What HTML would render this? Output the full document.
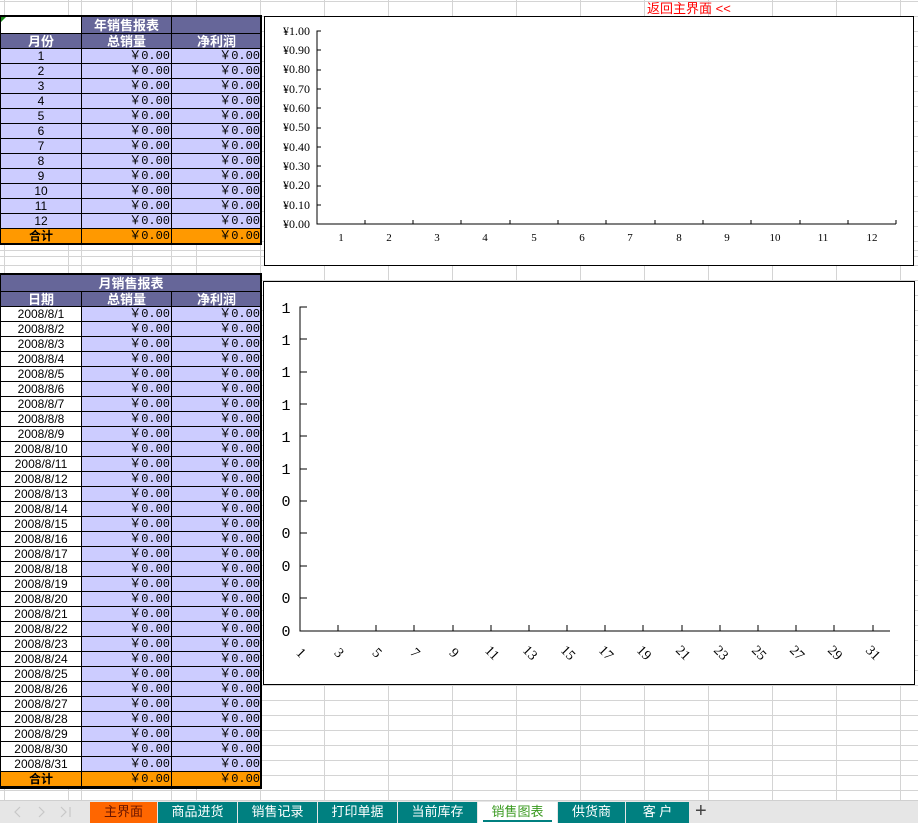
<!DOCTYPE html>
<html><head><meta charset="utf-8"><style>
*{margin:0;padding:0;box-sizing:border-box}
body{width:918px;height:823px;overflow:hidden;background:#fff;position:relative;font-family:"Liberation Sans","Noto Sans CJK SC",sans-serif}
.grid{position:absolute;left:0;width:918px;
background-image:linear-gradient(to right,#d4d4d4 1px,transparent 1px),linear-gradient(to bottom,#d4d4d4 1px,transparent 1px);}
.g1{top:0;height:260px;background-size:64px 15px;background-position:260px 1px}
.g2{top:243px;height:557px;background-size:64px 15px;background-position:260px 7px}
.gl{position:absolute;top:0;width:1px;height:800px;background:#d4d4d4}
table{position:absolute;left:0;border-collapse:collapse;width:261px;table-layout:fixed}
td{height:15px;font-size:12px;line-height:13px;border:1px solid #000;padding:0 1px;white-space:nowrap;overflow:hidden}
td.n{text-align:right;font-family:"Liberation Mono","Noto Sans CJK SC",monospace;background:#ccccff}
td.c{text-align:center;background:#ccccff}
td.w{text-align:center;background:#fff}
tr.h td{background:#666699;color:#fff;font-weight:bold;text-align:center;font-size:13px}
tr.t td{background:#ff9900;font-weight:bold}
tr.t td.n{background:#ff9900;font-weight:normal}
.box{position:absolute;border:2px solid #000;pointer-events:none}
.chart{position:absolute;background:#fff;border:1px solid #000}
.tabs{position:absolute;left:0;top:800px;width:918px;height:23px;background:#e6e6e6;border-top:1px solid #d0d0d0}
.tab{position:absolute;top:1px;height:21px;background:#008080;color:#fff;font-size:13px;text-align:center;line-height:20px}
</style></head><body>
<div class="grid g1"></div>
<div class="grid g2"></div>
<div class="gl" style="left:81px"></div><div class="gl" style="left:171px"></div>

<div style="position:absolute;left:647px;top:2px;color:#f00;font-size:13px;line-height:14px">返回主界面 &lt;&lt;</div>

<table style="top:16px">
<colgroup><col style="width:81px"><col style="width:90px"><col style="width:90px"></colgroup>
<tr class="h"><td style="background:#fff;height:17px;position:relative"><span style="position:absolute;left:0;top:0;border-top:5px solid #1a8a1a;border-right:5px solid transparent"></span></td><td>年销售报表</td><td></td></tr>
<tr class="h"><td>月份</td><td>总销量</td><td>净利润</td></tr>
<tr><td class="c">1</td><td class="n">￥0.00</td><td class="n">￥0.00</td></tr>
<tr><td class="c">2</td><td class="n">￥0.00</td><td class="n">￥0.00</td></tr>
<tr><td class="c">3</td><td class="n">￥0.00</td><td class="n">￥0.00</td></tr>
<tr><td class="c">4</td><td class="n">￥0.00</td><td class="n">￥0.00</td></tr>
<tr><td class="c">5</td><td class="n">￥0.00</td><td class="n">￥0.00</td></tr>
<tr><td class="c">6</td><td class="n">￥0.00</td><td class="n">￥0.00</td></tr>
<tr><td class="c">7</td><td class="n">￥0.00</td><td class="n">￥0.00</td></tr>
<tr><td class="c">8</td><td class="n">￥0.00</td><td class="n">￥0.00</td></tr>
<tr><td class="c">9</td><td class="n">￥0.00</td><td class="n">￥0.00</td></tr>
<tr><td class="c">10</td><td class="n">￥0.00</td><td class="n">￥0.00</td></tr>
<tr><td class="c">11</td><td class="n">￥0.00</td><td class="n">￥0.00</td></tr>
<tr><td class="c">12</td><td class="n">￥0.00</td><td class="n">￥0.00</td></tr>
<tr class="t"><td style="text-align:center">合计</td><td class="n">￥0.00</td><td class="n">￥0.00</td></tr>
</table>
<div class="box" style="left:-2px;top:15px;width:264px;height:230px"></div>

<table style="top:274px">
<colgroup><col style="width:81px"><col style="width:90px"><col style="width:90px"></colgroup>
<tr class="h"><td colspan="3" style="height:17px">月销售报表</td></tr>
<tr class="h"><td>日期</td><td>总销量</td><td>净利润</td></tr>
<tr><td class="w">2008/8/1</td><td class="n">￥0.00</td><td class="n">￥0.00</td></tr>
<tr><td class="w">2008/8/2</td><td class="n">￥0.00</td><td class="n">￥0.00</td></tr>
<tr><td class="w">2008/8/3</td><td class="n">￥0.00</td><td class="n">￥0.00</td></tr>
<tr><td class="w">2008/8/4</td><td class="n">￥0.00</td><td class="n">￥0.00</td></tr>
<tr><td class="w">2008/8/5</td><td class="n">￥0.00</td><td class="n">￥0.00</td></tr>
<tr><td class="w">2008/8/6</td><td class="n">￥0.00</td><td class="n">￥0.00</td></tr>
<tr><td class="w">2008/8/7</td><td class="n">￥0.00</td><td class="n">￥0.00</td></tr>
<tr><td class="w">2008/8/8</td><td class="n">￥0.00</td><td class="n">￥0.00</td></tr>
<tr><td class="w">2008/8/9</td><td class="n">￥0.00</td><td class="n">￥0.00</td></tr>
<tr><td class="w">2008/8/10</td><td class="n">￥0.00</td><td class="n">￥0.00</td></tr>
<tr><td class="w">2008/8/11</td><td class="n">￥0.00</td><td class="n">￥0.00</td></tr>
<tr><td class="w">2008/8/12</td><td class="n">￥0.00</td><td class="n">￥0.00</td></tr>
<tr><td class="w">2008/8/13</td><td class="n">￥0.00</td><td class="n">￥0.00</td></tr>
<tr><td class="w">2008/8/14</td><td class="n">￥0.00</td><td class="n">￥0.00</td></tr>
<tr><td class="w">2008/8/15</td><td class="n">￥0.00</td><td class="n">￥0.00</td></tr>
<tr><td class="w">2008/8/16</td><td class="n">￥0.00</td><td class="n">￥0.00</td></tr>
<tr><td class="w">2008/8/17</td><td class="n">￥0.00</td><td class="n">￥0.00</td></tr>
<tr><td class="w">2008/8/18</td><td class="n">￥0.00</td><td class="n">￥0.00</td></tr>
<tr><td class="w">2008/8/19</td><td class="n">￥0.00</td><td class="n">￥0.00</td></tr>
<tr><td class="w">2008/8/20</td><td class="n">￥0.00</td><td class="n">￥0.00</td></tr>
<tr><td class="w">2008/8/21</td><td class="n">￥0.00</td><td class="n">￥0.00</td></tr>
<tr><td class="w">2008/8/22</td><td class="n">￥0.00</td><td class="n">￥0.00</td></tr>
<tr><td class="w">2008/8/23</td><td class="n">￥0.00</td><td class="n">￥0.00</td></tr>
<tr><td class="w">2008/8/24</td><td class="n">￥0.00</td><td class="n">￥0.00</td></tr>
<tr><td class="w">2008/8/25</td><td class="n">￥0.00</td><td class="n">￥0.00</td></tr>
<tr><td class="w">2008/8/26</td><td class="n">￥0.00</td><td class="n">￥0.00</td></tr>
<tr><td class="w">2008/8/27</td><td class="n">￥0.00</td><td class="n">￥0.00</td></tr>
<tr><td class="w">2008/8/28</td><td class="n">￥0.00</td><td class="n">￥0.00</td></tr>
<tr><td class="w">2008/8/29</td><td class="n">￥0.00</td><td class="n">￥0.00</td></tr>
<tr><td class="w">2008/8/30</td><td class="n">￥0.00</td><td class="n">￥0.00</td></tr>
<tr><td class="w">2008/8/31</td><td class="n">￥0.00</td><td class="n">￥0.00</td></tr>
<tr class="t"><td style="text-align:center">合计</td><td class="n">￥0.00</td><td class="n">￥0.00</td></tr>
</table>
<div class="box" style="left:-2px;top:273px;width:264px;height:516px"></div>

<div class="chart" style="left:264px;top:16px;width:650px;height:250px"></div>
<svg style="position:absolute;left:0;top:0" width="918" height="823">
<g font-family="Liberation Serif,serif" font-size="12" fill="#000" text-anchor="end">
<text x="310" y="35">¥1.00</text><text x="310" y="54">¥0.90</text><text x="310" y="73">¥0.80</text><text x="310" y="93">¥0.70</text><text x="310" y="112">¥0.60</text><text x="310" y="131">¥0.50</text><text x="310" y="151">¥0.40</text><text x="310" y="170">¥0.30</text><text x="310" y="189">¥0.20</text><text x="310" y="209">¥0.10</text><text x="310" y="228">¥0.00</text>
</g>
<path d="M321 31H317V224H896M317 50h4M317 70h4M317 89h4M317 108h4M317 128h4M317 147h4M317 166h4M317 186h4M317 205h4M365 224v-4M413 224v-4M461 224v-4M510 224v-4M558 224v-4M606 224v-4M655 224v-4M703 224v-4M751 224v-4M800 224v-4M848 224v-4M896 224v-4" stroke="#000" fill="none"/>
<g font-family="Liberation Serif,serif" font-size="11" text-anchor="middle">
<text x="341" y="241">1</text><text x="389" y="241">2</text><text x="437" y="241">3</text><text x="485" y="241">4</text><text x="534" y="241">5</text><text x="582" y="241">6</text><text x="630" y="241">7</text><text x="679" y="241">8</text><text x="727" y="241">9</text><text x="775" y="241">10</text><text x="823" y="241">11</text><text x="872" y="241">12</text>
</g>
<rect x="263.5" y="281.5" width="651" height="403" fill="#fff" stroke="#000"/>
<g font-family="Liberation Mono,monospace" font-size="15" text-anchor="middle">
<text x="286" y="313">1</text><text x="286" y="345">1</text><text x="286" y="377">1</text><text x="286" y="410">1</text><text x="286" y="442">1</text><text x="286" y="474">1</text><text x="286" y="506">0</text><text x="286" y="538">0</text><text x="286" y="571">0</text><text x="286" y="603">0</text><text x="286" y="636">0</text>
</g>
<path d="M307 307H300V631H890M300 339h7M300 372h7M300 404h7M300 436h7M300 469h7M300 501h7M300 533h7M300 566h7M300 598h7" stroke="#000" fill="none"/>
<path d="M338 631v-6M376 631v-6M414 631v-6M453 631v-6M491 631v-6M529 631v-6M567 631v-6M605 631v-6M643 631v-6M682 631v-6M720 631v-6M758 631v-6M796 631v-6M834 631v-6M873 631v-6" stroke="#000"/>
<g font-family="Liberation Serif,serif" font-size="14" text-anchor="middle">
<text transform="translate(298,656) rotate(45)">1</text><text transform="translate(336,656) rotate(45)">3</text><text transform="translate(374,656) rotate(45)">5</text><text transform="translate(412,656) rotate(45)">7</text><text transform="translate(451,656) rotate(45)">9</text><text transform="translate(489,656) rotate(45)">11</text><text transform="translate(527,656) rotate(45)">13</text><text transform="translate(565,656) rotate(45)">15</text><text transform="translate(603,656) rotate(45)">17</text><text transform="translate(641,656) rotate(45)">19</text><text transform="translate(680,656) rotate(45)">21</text><text transform="translate(718,656) rotate(45)">23</text><text transform="translate(756,656) rotate(45)">25</text><text transform="translate(794,656) rotate(45)">27</text><text transform="translate(832,656) rotate(45)">29</text><text transform="translate(870,656) rotate(45)">31</text>
</g>
</svg>

<div class="tabs">
<svg style="position:absolute;left:0;top:0" width="90" height="22"><path d="M20 6l-5 5 5 5M39 6l5 5-5 5M61 6l5 5-5 5M70 6v10" stroke="#c8c8c8" fill="none" stroke-width="1.2"/></svg>
<div class="tab" style="left:90px;width:67px;background:#ff6600;color:#6a1500">主界面</div>
<div class="tab" style="left:158px;width:79px">商品进货</div>
<div class="tab" style="left:238px;width:79px">销售记录</div>
<div class="tab" style="left:318px;width:79px">打印单据</div>
<div class="tab" style="left:398px;width:79px">当前库存</div>
<div class="tab" style="left:478px;width:79px;background:#fff;color:#3a9a20">销售图表<div style="position:absolute;left:5px;right:5px;bottom:1px;height:2px;background:#008080"></div></div>
<div class="tab" style="left:558px;width:67px">供货商</div>
<div class="tab" style="left:626px;width:63px">客 户</div>
<div style="position:absolute;left:695px;top:-1px;font-size:20px;color:#444;line-height:22px">+</div>
</div>
</body></html>
